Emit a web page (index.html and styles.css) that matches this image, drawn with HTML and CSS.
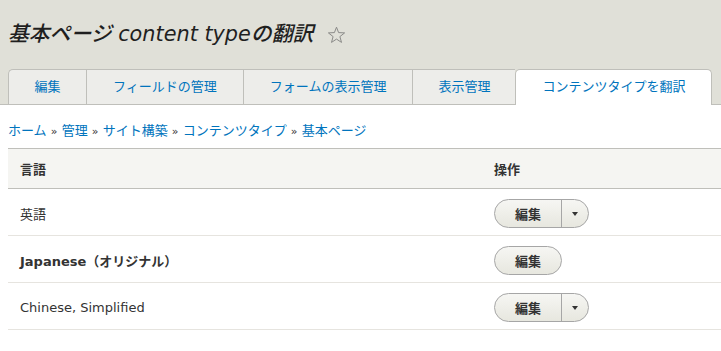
FILE: index.html
```html
<!DOCTYPE html>
<html lang="ja">
<head>
<meta charset="utf-8">
<title>基本ページ content typeの翻訳</title>
<link rel="stylesheet" href="styles.css">
</head>
<body>
<div class="header">
  <h1 class="title">基本ページ content typeの翻訳 <svg class="star" width="19" height="18" viewBox="0 0 19 18"><path d="M9.5 1.2 L11.6 6.6 L17.6 6.9 L12.9 10.6 L14.5 16.4 L9.5 13.1 L4.5 16.4 L6.1 10.6 L1.4 6.9 L7.4 6.6 Z" fill="none" stroke="#8a8a88" stroke-width="1" stroke-linejoin="round"/></svg></h1>
  <ul class="tabs">
    <li class="tab first"><a href="#">編集</a></li>
    <li class="tab"><a href="#">フィールドの管理</a></li>
    <li class="tab"><a href="#">フォームの表示管理</a></li>
    <li class="tab narrow"><a href="#">表示管理</a></li>
    <li class="tab active"><a href="#">コンテンツタイプを翻訳</a></li>
  </ul>
</div>
<div class="content">
  <nav class="breadcrumb">
    <a href="#">ホーム</a> <span class="sep">»</span> <a href="#">管理</a> <span class="sep">»</span> <a href="#">サイト構築</a> <span class="sep">»</span> <a href="#">コンテンツタイプ</a> <span class="sep">»</span> <a href="#">基本ページ</a>
  </nav>
  <div class="table">
    <div class="row head">
      <div class="cell text">言語</div>
      <div class="cell text">操作</div>
    </div>
    <div class="row">
      <div class="cell text">英語</div>
      <div class="cell ops">
        <div class="dropbutton"><span class="btn-main">編集</span><span class="btn-toggle"><span class="arrow"></span></span></div>
      </div>
    </div>
    <div class="row">
      <div class="cell text"><strong>Japanese（オリジナル）</strong></div>
      <div class="cell ops">
        <div class="dropbutton single"><span class="btn-main">編集</span></div>
      </div>
    </div>
    <div class="row">
      <div class="cell text">Chinese, Simplified</div>
      <div class="cell ops">
        <div class="dropbutton"><span class="btn-main">編集</span><span class="btn-toggle"><span class="arrow"></span></span></div>
      </div>
    </div>
  </div>
</div>
</body>
</html>
```

FILE: styles.css
```css
html, body {
  margin: 0;
  padding: 0;
}
body {
  font-family: "DejaVu Sans", "Noto Sans CJK JP", sans-serif;
  font-size: 13px;
  color: #333;
  background: #fff;
  overflow: hidden;
}
a {
  color: #0074bd;
  text-decoration: none;
}
.header {
  background: #e0e0d8;
  padding: 20px 8px 0;
  border-bottom: 1px solid #bfbfba;
}
.title {
  margin: 0;
  font-size: 20.8px;
  line-height: 28px;
  font-weight: 500;
  font-style: italic;
  color: #1f1f1f;
  display: flex;
  align-items: center;
  white-space: nowrap;
}
.star {
  margin-left: 14px;
  margin-top: 2px;
}
.tabs {
  list-style: none;
  margin: 21px 0 -1px;
  padding: 0;
  display: flex;
}
.tab {
  flex: none;
  white-space: nowrap;
  background: #ededea;
  border: 1px solid #bfbfba;
  border-bottom: none;
  border-right: none;
  height: 34px;
  display: flex;
  align-items: center;
}
.tab a {
  padding: 0 26px;
  line-height: 18px;
}
.tab.first a {
  padding: 0 25.5px;
}
.tab.narrow a {
  padding: 0 25px;
}
.tab.first {
  border-top-left-radius: 5px;
}
.tab.active {
  background: #fff;
  border-right: 1px solid #bfbfba;
  border-top-left-radius: 5px;
  border-top-right-radius: 5px;
  height: 35px;
  align-items: flex-start;
}
.tab.active a {
  margin-top: 8px;
}
.content {
  padding: 0 8px;
}
.breadcrumb {
  margin: 17px 0 7px;
  line-height: 18px;
  white-space: nowrap;
}
.breadcrumb .sep {
  color: #333;
  font-size: 11px;
}
.table {
  margin-right: -8px;
}
.row {
  display: grid;
  grid-template-columns: 474px 1fr;
  border-bottom: 1px solid #e6e4df;
  height: 46px;
}
.row.head {
  background: #f5f5f2;
  border-top: 1px solid #bfbfba;
  border-bottom: 1px solid #bfbfba;
  height: 39px;
  font-weight: bold;
}
.cell {
  padding: 0 12px;
  display: flex;
}
.cell.text {
  align-items: center;
  white-space: nowrap;
}
.row:not(.head) .cell.text {
  padding-top: 2px;
}
.cell.ops {
  padding-top: 10px;
  align-items: flex-start;
}
.dropbutton {
  display: flex;
  height: 27px;
  border: 1px solid #a6a6a6;
  border-radius: 20em;
  background: linear-gradient(to bottom, #f6f6f3, #e7e7df);
  overflow: hidden;
}
.btn-main {
  display: flex;
  align-items: center;
  padding: 0 20px;
  font-weight: bold;
  color: #333;
  border-right: 1px solid #a6a6a6;
}
.dropbutton.single .btn-main {
  border-right: none;
}
.btn-toggle {
  width: 26px;
  display: flex;
  align-items: center;
  justify-content: center;
}
.arrow {
  width: 0;
  height: 0;
  border-left: 3.5px solid transparent;
  border-right: 3.5px solid transparent;
  border-top: 4px solid #333;
  margin-top: 1px;
  margin-right: 1px;
}
```
